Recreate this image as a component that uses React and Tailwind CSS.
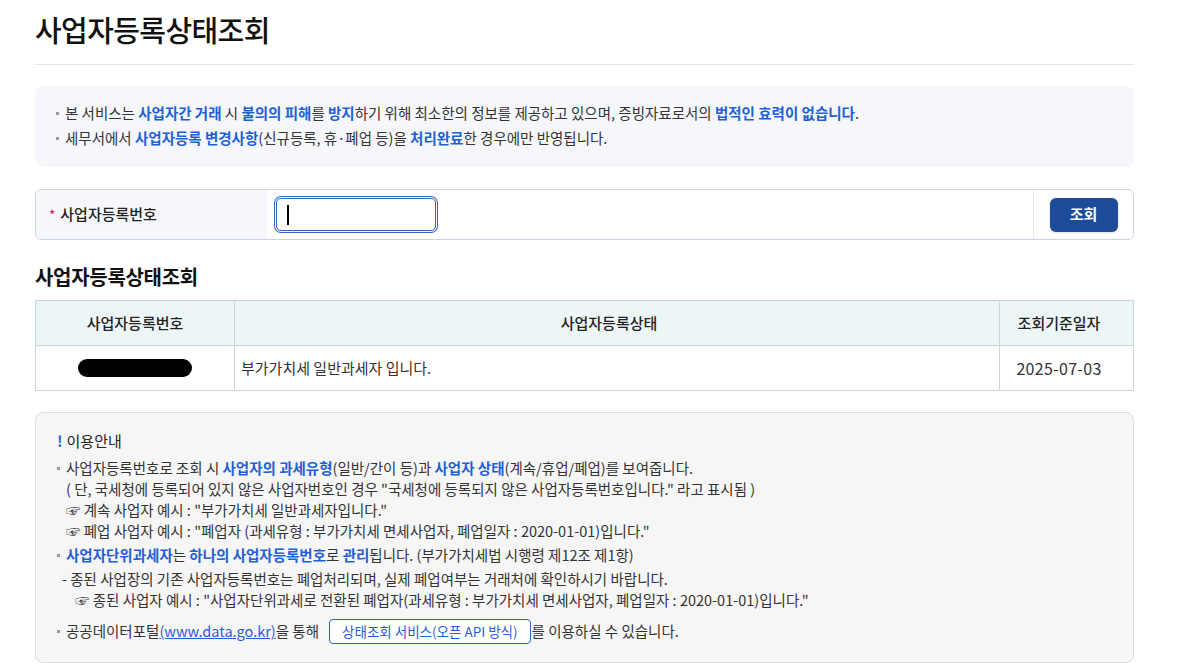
import React from "react";

const B = ({ children }) => (
  <span className="font-bold text-[#1f5fd6]">{children}</span>
);

// 회색 네모 불릿
const Dot = () => (
  <span className="inline-block w-[9px] align-top">
    <span className="inline-block w-[3px] h-[3px] bg-[#999] relative top-[-4px]" />
  </span>
);

export default function App() {
  return (
    <div
      className="min-h-[668px] bg-white text-[#333]"
      style={{ fontFamily: '"Noto Sans CJK KR", "Noto Sans", sans-serif' }}
    >
      <div className="ml-[35px] w-[1099px]">
        {/* 페이지 제목 */}
        <div className="pt-[9px] pb-[15px] border-b border-[#e4e4e4]">
          <h1 className="text-[29px] leading-[40px] font-medium text-[#111] tracking-[-0.6px]">
            사업자등록상태조회
          </h1>
        </div>

        {/* 안내 박스 */}
        <div className="mt-[21px] rounded-lg bg-[#f5f7fc] pt-[14px] pb-[17px] pl-[21px] text-[14.5px] leading-[25px] text-[#333]">
          <p>
            <Dot />본 서비스는 <B>사업자간 거래</B> 시 <B>불의의 피해</B>를 <B>방지</B>하기 위해 최소한의 정보를 제공하고 있으며, 증빙자료로서의 <B>법적인 효력이 없습니다</B>.
          </p>
          <p>
            <Dot />세무서에서 <B>사업자등록 변경사항</B>(신규등록, 휴·폐업 등)을 <B>처리완료</B>한 경우에만 반영됩니다.
          </p>
        </div>

        {/* 조회 폼 */}
        <div className="mt-[22px] flex h-[51px] rounded-md border border-[#cad4e4] overflow-hidden">
          <div className="w-[231px] bg-[#f5f7fc] flex items-center pl-[13px] text-[15px] font-medium text-[#222]">
            <span className="text-[#d8246c] mr-[5px] text-[13px]">*</span>사업자등록번호
          </div>
          <div className="flex-1 flex items-center pl-[9px]">
            <div className="w-[160px] h-[33px] rounded-[5px] border border-[#3464bd] ring-1 ring-[#3464bd] ring-offset-1 flex items-center pl-[10px]">
              <span className="block w-[1.5px] h-[20px] bg-black" />
            </div>
          </div>
          <div className="w-[100px] border-l border-[#e6eaf0] flex items-center justify-center">
            <button className="w-[68px] h-[34px] rounded-md bg-[#1c4b9c] text-white text-[15px] font-bold shadow-sm">
              조회
            </button>
          </div>
        </div>

        {/* 결과 */}
        <h2 className="mt-[23px] text-[20px] leading-[28px] font-bold text-[#111] tracking-[-0.3px]">
          사업자등록상태조회
        </h2>
        <table className="mt-[9px] w-full border-collapse text-[15px]">
          <thead>
            <tr className="bg-[#edf6f7] h-[45px]">
              <th className="w-[199px] border border-[#c6d6dc] font-medium text-[#222]">사업자등록번호</th>
              <th className="border border-[#c6d6dc] pr-[16px] font-medium text-[#222]">사업자등록상태</th>
              <th className="w-[134px] border border-[#c6d6dc] pr-[15px] font-medium text-[#222]">조회기준일자</th>
            </tr>
          </thead>
          <tbody>
            <tr className="h-[45px]">
              <td className="border border-[#c6d6dc]">
                <div className="mx-auto w-[114px] h-[18px] rounded-full bg-black" />
              </td>
              <td className="border border-[#c6d6dc] pl-[6px] text-[#333]">부가가치세 일반과세자 입니다.</td>
              <td className="border border-[#c6d6dc] pr-[15px] text-center text-[16px] tracking-[0.3px] text-[#333]">2025-07-03</td>
            </tr>
          </tbody>
        </table>

        {/* 이용안내 */}
        <div className="mt-[21px] rounded-lg border border-[#dcdcdc] bg-[#f6f6f6] pt-[17px] pb-[16px] pl-[21px] text-[14.5px] leading-[21px] text-[#333]">
          <p className="text-[15px] leading-[22px] text-[#222]">
            <span className="font-bold text-[#1f5fd6] mr-[4px]">!</span>이용안내
          </p>
          <div className="mt-[5px]">
            <p>
              <Dot />사업자등록번호로 조회 시 <B>사업자의 과세유형</B>(일반/간이 등)과 <B>사업자 상태</B>(계속/휴업/폐업)를 보여줍니다.
            </p>
            <p className="pl-[9px]">( 단, 국세청에 등록되어 있지 않은 사업자번호인 경우 "국세청에 등록되지 않은 사업자등록번호입니다." 라고 표시됨 )</p>
            <p className="pl-[9px]">☞ 계속 사업자 예시 : "부가가치세 일반과세자입니다."</p>
            <p className="pl-[9px]">☞ 폐업 사업자 예시 : "폐업자 (과세유형 : 부가가치세 면세사업자, 폐업일자 : 2020-01-01)입니다."</p>
          </div>
          <div className="mt-[3px]">
            <p>
              <Dot /><B>사업자단위과세자</B>는 <B>하나의 사업자등록번호</B>로 <B>관리</B>됩니다. (부가가치세법 시행령 제12조 제1항)
            </p>
            <p className="pl-[5px] mt-[3px]">- 종된 사업장의 기존 사업자등록번호는 폐업처리되며, 실제 폐업여부는 거래처에 확인하시기 바랍니다.</p>
            <p className="pl-[18px]">☞ 종된 사업자 예시 : "사업자단위과세로 전환된 폐업자(과세유형 : 부가가치세 면세사업자, 폐업일자 : 2020-01-01)입니다."</p>
          </div>
          <p className="mt-[6px] flex items-center leading-[30px]">
            <Dot />공공데이터포털
            <a className="text-[#1f5fd6] underline">(www.data.go.kr)</a>을 통해
            <span className="ml-[10px] mr-[1px] inline-flex items-center h-[25px] px-[12px] rounded-[4px] border border-[#3464bd] bg-white text-[13.5px] text-[#1f5fd6]">
              상태조회 서비스(오픈 API 방식)
            </span>
            를 이용하실 수 있습니다.
          </p>
        </div>
      </div>
    </div>
  );
}
